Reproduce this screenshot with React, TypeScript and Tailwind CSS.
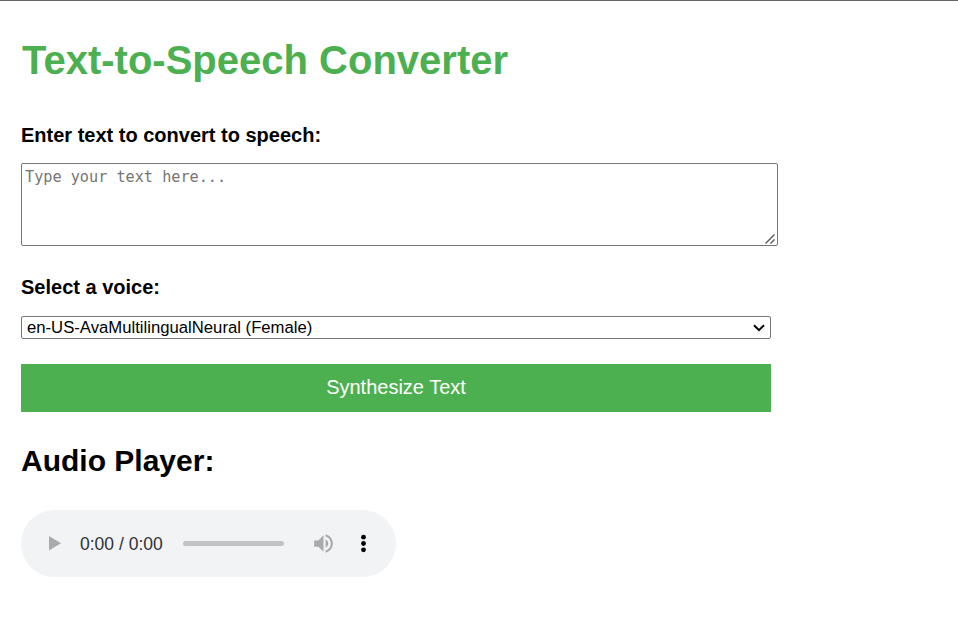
export default function App() {
  return (
    <main className="h-[633px] overflow-hidden border-t border-[#666] bg-white pl-[21px] font-['Liberation_Sans',Arial,sans-serif] text-black">
      <h1 className="mt-[35px] h-12 w-max whitespace-nowrap pl-px text-[40px] font-bold leading-[48px] text-[#4caf50]">Text-to-Speech Converter</h1>
      <label className="mt-[39px] block h-6 text-[20px] font-bold leading-6">Enter text to convert to speech:</label>
      <div className="relative mt-4 h-[83px] w-[757px] rounded-[2px] border border-[#767676] bg-white">
        <div className="pl-[3px] pt-[3px] font-['DejaVu_Sans_Mono',monospace] text-[15.2px] leading-5 text-[#757575]">Type your text here...</div>
        <svg className="absolute bottom-0 right-0" width="14" height="14" viewBox="0 0 14 14" fill="none" stroke="#555" strokeWidth="1.4"><path d="m2.5 12.5 9-9M7.5 12.5l4-4" /></svg>
      </div>
      <label className="mt-[29px] block h-6 text-[20px] font-bold leading-6">Select a voice:</label>
      <button className="mt-[17px] flex h-[23px] w-[750px] items-center justify-between rounded-[2px] border border-[#767676] bg-white pl-[5px] pr-[5px] text-[16.7px] leading-[21px]">
        <span>en-US-AvaMultilingualNeural (Female)</span>
        <svg width="12" height="8" viewBox="0 0 12 8" fill="none" stroke="#000" strokeWidth="2"><path d="m1 1.2 5 5 5-5" /></svg>
      </button>
      <button className="mt-[25px] block h-12 w-[750px] bg-[#4caf50] pb-0.5 text-center text-[20px] leading-[46px] text-white">Synthesize Text</button>
      <h2 className="mt-[31px] h-9 text-[30px] font-bold leading-9">Audio Player:</h2>
      <div className="mt-[31px] flex h-[67px] w-[375px] items-center rounded-full bg-[#f1f3f4]">
        <svg className="ml-[28px]" width="12" height="15" viewBox="0 0 12 15" fill="#aaa"><path d="M0 0v14.5l12-7.25z" /></svg>
        <span className="ml-[19px] w-[83px] whitespace-nowrap text-[17.5px] leading-5 text-[#303134]">0:00 / 0:00</span>
        <div className="ml-[20px] h-[5px] w-[101px] rounded-full bg-[#c1c2c3]" />
        <svg className="ml-[27px]" width="25" height="25" viewBox="0 0 24 24" fill="#aaa"><path d="M3 9v6h4l5 5V4L7 9H3zm13.5 3c0-1.77-1.02-3.29-2.5-4.03v8.05c1.48-.73 2.5-2.25 2.5-4.02zM14 3.23v2.06c2.89.86 5 3.54 5 6.71s-2.11 5.85-5 6.71v2.06c4.01-.91 7-4.49 7-8.77s-2.99-7.86-7-8.77z" /></svg>
        <svg className="ml-[15px]" width="25" height="25" viewBox="0 0 25 25" fill="#000"><circle cx="12.5" cy="6.2" r="2.4"/><circle cx="12.5" cy="12.5" r="2.4"/><circle cx="12.5" cy="18.8" r="2.4"/></svg>
      </div>
    </main>
  );
}
